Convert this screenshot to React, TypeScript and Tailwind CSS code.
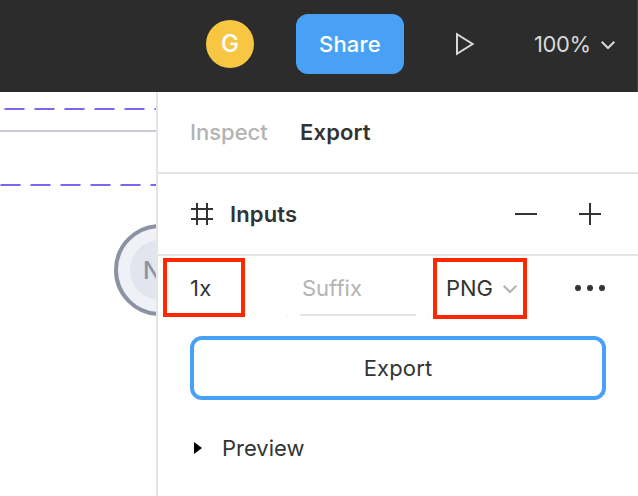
import React from "react";

function Header() {
  return (
    <header className="flex h-[92px] w-full shrink-0 items-center border-r border-[#454545] bg-[#2c2c2c] pb-1">
      <div className="ml-[206px] flex size-12 items-center justify-center rounded-full bg-[#f7c744] text-2xl font-medium text-white">
        G
      </div>
      <button className="ml-[42px] flex h-[60px] w-[108px] items-center justify-center rounded-xl bg-[#49a1f6] text-[22px] font-medium tracking-[0.2px] text-white">
        Share
      </button>
      <svg className="ml-[50px]" width="22" height="28" viewBox="0 0 22 28" fill="none" stroke="#d9d9d9" strokeWidth="2">
        <path d="M3 4.2V23.8L18.6 14Z" />
      </svg>
      <span className="ml-[58px] w-[60px] text-[22px] tracking-[-0.4px] text-[#d9d9d9]">100%</span>
      <svg className="ml-1.5" width="16" height="16" viewBox="0 0 16 16" fill="none" stroke="#d9d9d9" strokeWidth="2">
        <path d="M1.7 5.7L8 12L14.3 5.7" />
      </svg>
    </header>
  );
}

function Canvas() {
  return (
    <div className="relative w-[156px] shrink-0 overflow-hidden bg-white">
      <svg width="156" height="404" viewBox="0 0 156 404" fill="none" strokeWidth="2">
        <path d="M4.5 17H156" stroke="#7b68ee" strokeDasharray="20 10" />
        <path d="M0 39H156" stroke="#c8cad8" />
        <path d="M0.5 93H156" stroke="#7b68ee" strokeDasharray="20 10" />
      </svg>
      <div className="absolute top-[132px] left-[114px] flex size-[92px] items-center justify-center rounded-full border-4 border-[#8b92a2] bg-[#eff1f7]">
        <div className="flex size-[60px] items-center rounded-full bg-[#e2e5ee] pt-0.5 pl-[13px] text-2xl font-medium text-[#8b92a2]">
          N
        </div>
      </div>
    </div>
  );
}

function ExportSettings() {
  return (
    <div className="flex h-20 items-start pt-0.5">
      <div className="ml-[5px] flex h-[59px] w-[82px] items-center border-4 border-[#ff2600] pt-px pl-[23px] tracking-[0.3px]">1x</div>
      <div className="mt-[57px] ml-[42px] size-px bg-[#e5e5e5]" />
      <div className="ml-3 flex h-[58px] w-[116px] items-center border-b-2 border-[#e5e5e5] pt-[3px] pl-0.5 text-[#b3b3b3]">
        Suffix
      </div>
      <div className="mt-[57px] ml-3 size-px bg-[#e5e5e5]" />
      <div className="ml-1 flex h-[61px] w-[94px] items-center border-4 border-[#ff2600] pb-px pl-[9px]">
        <span className="w-12 tracking-[-0.1px]">PNG</span>
        <svg className="mt-0.5 ml-2" width="16" height="16" viewBox="0 0 16 16" fill="none" stroke="#b3b3b3" strokeWidth="2">
          <path d="M1.7 4.7L8 11L14.3 4.7" />
        </svg>
      </div>
      <svg className="mt-[26px] ml-12" width="32" height="8" viewBox="0 0 32 8" fill="#333">
        <circle cx="3" cy="4" r="3" />
        <circle cx="15" cy="4" r="3" />
        <circle cx="27" cy="4" r="3" />
      </svg>
    </div>
  );
}

export default function App() {
  return (
    <div className="flex h-[496px] w-[638px] flex-col overflow-hidden bg-white font-['Inter',sans-serif] text-[22px] leading-8 text-[#333]">
      <Header />
      <div className="flex h-[404px]">
        <Canvas />
        <aside className="w-[482px] border-l-2 border-[#e5e5e5] bg-white">
          <nav className="flex h-[82px] items-center border-b-2 border-[#e5e5e5] pl-8">
            <span className="w-[110px] font-medium text-[#b3b3b3]">Inspect</span>
            <span className="font-semibold tracking-[0.15px]">Export</span>
          </nav>
          <div className="flex h-[82px] items-center border-b-2 border-[#e5e5e5] pl-[33px]">
            <svg width="22" height="22" viewBox="0 0 22 22" stroke="#333" strokeWidth="2">
              <path d="M6 0V22M16 0V22M0 6H22M0 16H22" />
            </svg>
            <span className="ml-[17px] w-[285px] font-semibold tracking-[0.15px]">Inputs</span>
            <svg width="22" height="22" viewBox="0 0 22 22" stroke="#333" strokeWidth="2">
              <path d="M0 11H22" />
            </svg>
            <svg className="ml-[42px]" width="22" height="22" viewBox="0 0 22 22" stroke="#333" strokeWidth="2">
              <path d="M0 11H22M11 0V22" />
            </svg>
          </div>
          <ExportSettings />
          <button className="ml-8 flex h-16 w-[416px] items-center justify-center rounded-xl border-4 border-[#49a1f6] tracking-[0.15px]">
            Export
          </button>
          <div className="mt-8 flex h-8 items-center pl-9">
            <svg width="8" height="12" viewBox="0 0 8 12" fill="#000">
              <path d="M0 0L8 6L0 12Z" />
            </svg>
            <span className="ml-5">Preview</span>
          </div>
        </aside>
      </div>
    </div>
  );
}
